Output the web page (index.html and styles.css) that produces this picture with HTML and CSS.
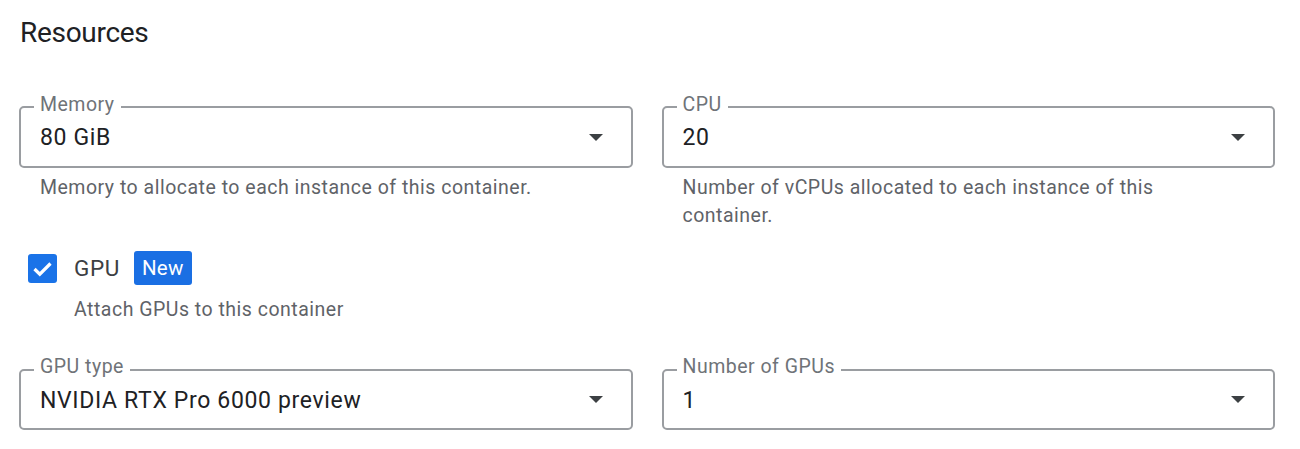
FILE: index.html
```html
<!DOCTYPE html>
<html lang="en">
<head>
<meta charset="utf-8">
<title>Resources</title>
<link rel="stylesheet" href="styles.css">
</head>
<body>
<main class="page">
  <h1 class="title">Resources</h1>

  <div class="row first-row">
    <div class="field">
      <fieldset class="select">
        <legend class="select-label">Memory</legend>
        <div class="select-body">
          <span class="select-value">80 GiB</span>
          <svg class="arrow" width="14" height="7" viewBox="0 0 14 7" aria-hidden="true"><polygon points="0,0 14,0 7,7"/></svg>
        </div>
      </fieldset>
      <p class="helper">Memory to allocate to each instance of this container.</p>
    </div>
    <div class="field">
      <fieldset class="select">
        <legend class="select-label">CPU</legend>
        <div class="select-body">
          <span class="select-value">20</span>
          <svg class="arrow" width="14" height="7" viewBox="0 0 14 7" aria-hidden="true"><polygon points="0,0 14,0 7,7"/></svg>
        </div>
      </fieldset>
      <p class="helper helper-narrow">Number of vCPUs allocated to each instance of this container.</p>
    </div>
  </div>

  <div class="check-row">
    <span class="checkbox">
      <svg width="29" height="29" viewBox="0 0 29 29" aria-hidden="true"><polyline points="6.5,15 11.8,20.2 22.5,9.5" fill="none" stroke="#fff" stroke-width="3.2"/></svg>
    </span>
    <span class="check-label">GPU</span>
    <span class="badge">New</span>
  </div>
  <p class="check-helper">Attach GPUs to this container</p>

  <div class="row second-row">
    <div class="field">
      <fieldset class="select">
        <legend class="select-label">GPU type</legend>
        <div class="select-body">
          <span class="select-value">NVIDIA RTX Pro 6000 preview</span>
          <svg class="arrow" width="14" height="7" viewBox="0 0 14 7" aria-hidden="true"><polygon points="0,0 14,0 7,7"/></svg>
        </div>
      </fieldset>
    </div>
    <div class="field">
      <fieldset class="select">
        <legend class="select-label">Number of GPUs</legend>
        <div class="select-body">
          <span class="select-value">1</span>
          <svg class="arrow" width="14" height="7" viewBox="0 0 14 7" aria-hidden="true"><polygon points="0,0 14,0 7,7"/></svg>
        </div>
      </fieldset>
    </div>
  </div>
</main>
</body>
</html>
```

FILE: styles.css
```css
html, body {
  margin: 0;
  padding: 0;
  background: #ffffff;
}

body {
  font-family: Roboto, "Liberation Sans", Arial, sans-serif;
  color: #202124;
}

.page {
  padding: 0 25px 0 19px;
}

.title {
  margin: 0;
  padding: 15px 0 0 1px;
  font-size: 28px;
  line-height: 36px;
  font-weight: 400;
  letter-spacing: -0.3px;
  color: #202124;
}

.row {
  display: grid;
  grid-template-columns: 1fr 1fr;
  column-gap: 29px;
}

.first-row {
  margin-top: 43.5px;
}

.second-row {
  margin-top: 33px;
}

.field {
  min-width: 0;
}

.select {
  margin: 0;
  min-width: 0;
  padding: 0 28px 13.5px 19px;
  border: 2px solid #9a9da1;
  border-radius: 5px;
}

.select-label {
  margin-left: -6px;
  padding: 0 6px 5px;
  font-size: 19.5px;
  line-height: 20px;
  letter-spacing: 0.5px;
  color: #6f7378;
}

.select-body {
  display: flex;
  align-items: center;
  justify-content: space-between;
  padding-top: 4.5px;
  height: 28px;
}

.select-value {
  font-size: 23px;
  line-height: 28px;
  letter-spacing: 0.65px;
  color: #202124;
}

.arrow {
  fill: #3c4043;
  margin-bottom: 2px;
}

.helper {
  margin: 6.5px 0 0;
  padding-left: 21px;
  font-size: 19.5px;
  line-height: 28px;
  letter-spacing: 0.5px;
  color: #5f6368;
}

.helper-narrow {
  max-width: 500px;
}

.check-row {
  display: flex;
  align-items: center;
  margin-top: 21px;
  height: 34px;
}

.checkbox {
  display: block;
  width: 29px;
  height: 29px;
  margin-left: 9px;
  border-radius: 3px;
  background: #1a73e8;
}

.checkbox svg {
  display: block;
}

.check-label {
  margin-left: 17px;
  font-size: 22.5px;
  line-height: 28px;
  letter-spacing: 0.6px;
  color: #3c4043;
}

.badge {
  margin-left: 14px;
  padding: 0 8px;
  height: 34px;
  line-height: 34px;
  border-radius: 3px;
  background: #1a6fe3;
  color: #ffffff;
  font-size: 20.5px;
  letter-spacing: 0.3px;
}

.check-helper {
  margin: 11px 0 0;
  padding-left: 55px;
  font-size: 19.5px;
  line-height: 28px;
  letter-spacing: 0.5px;
  color: #5f6368;
}
```
